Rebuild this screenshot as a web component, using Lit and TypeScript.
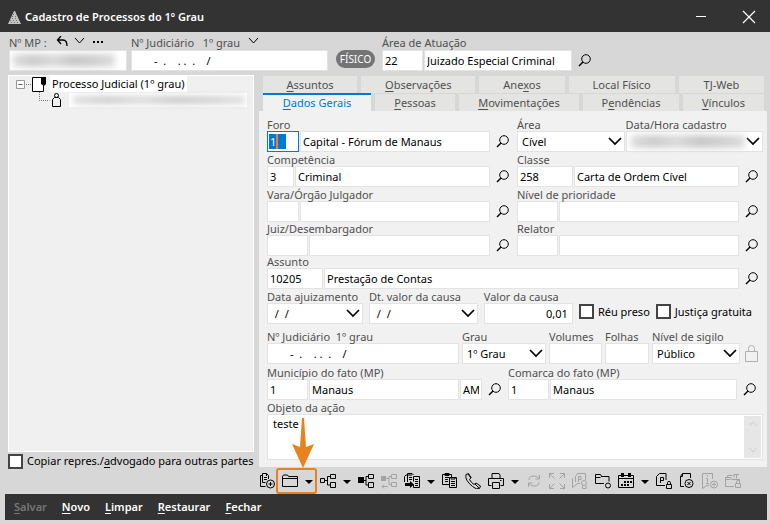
import { LitElement, html, css, svg, nothing, TemplateResult } from "lit";
import { customElement } from "lit/decorators.js";
import { classMap } from "lit/directives/class-map.js";

const lock = (x: number, y: number) =>
  svg`<path d="M${x} ${y + 3}h5v4h-5z M${x + 1} ${y + 3}v-2q0-1 1.5-1t1.5 1v2"/>`;

const icons: Record<string, TemplateResult> = {
  docsPlus: svg`<path d="M3.500 9.500V.5h4l2 2V6M7.500.5v2.500M3.500 2.500h-2V13.500h5M3.500 9.500h3M5 4.500h3M5 6.500h3"/><circle cx="11.500" cy="11" r="4"/><path d="M11.500 9v4M9.500 11h4"/>`,
  folder: svg`<path d="M.5 3.500v10h15v-10h-9l-1-1.500H1.500zM.5 5.500h15"/>`,
  tree: svg`<path d="M.5 5.500h4v4h-4zM10.500 1.500h5v4h-5zM10.500 9.500h5v5h-5zM4.500 7.500h3M10.500 3.500h-3v8.500h3"/>`,
  treeFull: svg`<path class="solid" d="M0 4h6v6H0z"/><path d="M6 7.500h2M10.500 1.500h5v4h-5zM10.500 9.500h5v5h-5zM10.500 3.500h-2.500v8.500h2.500"/>`,
  treeBack: svg`<path class="solid" d="M0 3h5v5H0z"/><path d="M5 5.500h3M10.500 1.500h5v4h-5zM10.500 9.500h5v4h-5zM10.500 3.500h-2.500v8h2.500M1 13.500h6M3 11.500l-2 2 2 2"/>`,
  docsArrow: svg`<path d="M3.500 2V.5H8L9.500 2M.5 9V3.500l1.500-1.500h6M3.500 2v7M5 4.500h3M5 6.500h3M9.500 3.500h6v11h-6v-3M9.500 3.500v5M11 6.500h3M11 8.500h3M11 10.500h3M11 12.500h3"/><path class="solid" d="M1 10h5V8l4 3.500L6 15v-2H1z"/>`,
  docs: svg`<path d="M7 11.500H.5v-10h9V4M3 4.500h4M3 6.500h3M3 8.500h3M3 .5h4v2H3zM7.500 4.500h7v10h-7zM9 4v2h4V4M9 8.500h4M9 10.500h4M9 12.500h4"/>`,
  phone: svg`<path d="M1 1.500 3.500.5l2.500 4-1.500 2q1.500 3 4.500 5l2-1.500 4.500 3-1 2.500q-3 1.500-7-2-8-6.500-6.500-12zM3 1l3 4M10 11l4 4"/>`,
  print: svg`<path d="M4 5.500v-5h7l1 1.500v3.500M3.500 12.500h-3v-7h15v7h-3M4.500 9.500h7v6h-7zM12 7.500h1.500"/>`,
  refresh: svg`<path d="M3 7q0-4 5-4 3 0 5 2.500M13.500 2v4h-4M13 9q0 4-5 4-3 0-5-2.500M2.500 14v-4h4"/>`,
  expand: svg`<path d="M.5 5V.5H5M.5.5l5 5M11 .5h4.500V5M15.500.5l-5 5M.5 11v4.500H5M.5 15.500l5-5M11 15.500h4.500V11M15.500 15.500l-5-5"/>`,
  stampP: svg`<path d="M3.500 9V3.500l2-3h8V7M6.500 9V3.500H9v3H6.500M.5 5.500v9l5-4H8"/><circle cx="12" cy="10" r="2.500"/><path d="M10.500 12.500v3h3.500v-3"/>`,
  folderDot: svg`<path d="M9 10.500H.5v-9h5l1 2h7.500v5M.5 4.500h5M6.500 3.500h7"/><circle cx="13" cy="12.500" r="2.500"/>`,
  calendar: svg`<path d="M.5 2.500h15v12H.5zM.5 5.500h15"/><path class="solid" d="M3 0h3v4H3zM10 0h3v4h-3zM6 8h2v2H6zM9 8h2v2H9zM12 8h2v2h-2zM3 11h2v2H3zM6 11h2v2H6zM9 11h2v2H9z"/>`,
  docPLock: svg`<path d="M9 12.500H.5V3.500l3-3h6.500V7M4.500 10V4.500h3v3h-3"/>${lock(10.5, 8.5)}`,
  docX: svg`<path d="M5 13.500H1.500V3.500l2-3h8V5M3.500.5v3h-2"/><circle cx="10" cy="10.500" r="4"/><path d="m8.500 9 3 3m0-3-3 3"/>`,
  bookPlus: svg`<path d="M7 12.500H5l-4.500 3V.5h10V6M5.500 2v1.500M4 5.500h1.500v4M4 10.500h3"/><circle cx="12" cy="11.500" r="3.500"/><path d="M12 9.500v4M10 11.500h4"/>`,
  folderLock: svg`<path d="M9 13.500H.5v-9h5l1.500 2h7M.5 6.500h5M2.500 4V2.500h5M9 4.500V1.500h5M11.500 1.500v4M14.500 6v2"/>${lock(10.5, 7.5)}`,
};

const draw = (name: string) =>
  html`<svg class="glyph" viewBox="0 0 16 16" width="16" height="16" aria-hidden="true">${icons[name]}</svg>`;

/* The letter after "&" is the access key and is underlined. */
const keyed = (text: string) => {
  const at = text.indexOf("&");
  return at < 0
    ? html`${text}`
    : html`${text.slice(0, at)}<u>${text[at + 1]}</u>${text.slice(at + 2)}`;
};

const CASE_MASK = "       -  .    . .  .    /";

interface Tool { icon: string; label: string; menu?: boolean; off?: boolean; marked?: boolean; }

const tools: Tool[] = [
  { icon: "docsPlus", label: "Adicionar documentos" },
  { icon: "folder", label: "Pasta digital", menu: true, marked: true },
  { icon: "tree", label: "Partes", menu: true },
  { icon: "treeFull", label: "Dependentes" },
  { icon: "treeBack", label: "Desvincular", off: true },
  { icon: "docsArrow", label: "Encaminhar", menu: true },
  { icon: "docs", label: "Copiar" },
  { icon: "phone", label: "Telefones" },
  { icon: "print", label: "Imprimir", menu: true },
  { icon: "refresh", label: "Atualizar", off: true },
  { icon: "expand", label: "Expandir", off: true },
  { icon: "stampP", label: "Certificar", off: true },
  { icon: "folderDot", label: "Situação da pasta" },
  { icon: "calendar", label: "Agenda", menu: true },
  { icon: "docPLock", label: "Sigilo" },
  { icon: "docX", label: "Cancelar documento" },
  { icon: "bookPlus", label: "Informações", off: true },
  { icon: "folderLock", label: "Bloquear pasta", off: true },
];

@customElement("app-root")
export class AppRoot extends LitElement {
  static styles = css`
    :host {
      display: flex; flex-direction: column; min-height: 100vh; box-sizing: border-box;
      background: #d7d7d7; color: #000;
      font: 11px/16px "Noto Sans", "Open Sans", sans-serif;
      --line: #e3e3e3; --dark: #333; --blue: #0078d7; --orange: #e8821e;
    }
    * { box-sizing: border-box; }
    button, input, select, textarea { font: inherit; color: inherit; margin: 0; border-radius: 0; }
    button { border: 0; padding: 0; background: none; }
    svg { display: block; fill: none; stroke: currentColor; }
    u { text-underline-offset: 2px; }

    .title { display: flex; align-items: center; height: 32px; padding: 2px 14px 0 8px; background: var(--dark); color: #fff; }
    .title h1 { flex: 1; margin: 0 0 0 4px; font-size: 11px; font-weight: 600; line-height: 16px; }
    .window { display: flex; gap: 34px; }
    .window button { width: 14px; height: 14px; }

    .head { display: grid; grid-template-columns: 118px 197fr 46px 209fr 175fr; align-items: end; column-gap: 4px; height: 39px; padding: 0 0 0 9px; }
    .cap { display: flex; align-items: center; height: 15px; color: #505050; }
    .cap svg { color: #000; }
    .pill { margin: 0 3px 3px 4px; height: 18px; border-radius: 9px; background: #747474; color: #fff; text-align: center; font-size: 10px; line-height: 18px; }

    input, select, textarea { min-width: 0; width: 100%; height: 21px; padding: 0 2px; border: 1px solid var(--line); background: #fff; outline: 0; }
    select { appearance: none; padding: 0 4px; }
    .money { text-align: right; padding-right: 4px; }
    .mask { white-space: pre; }
    .focus { border-color: var(--blue); color: #fff; padding: 0 2px;
      background: linear-gradient(#f08030, #f08030) 8px 2px / 2px 15px no-repeat, linear-gradient(var(--blue), var(--blue)) 1px 2px / 17px 15px no-repeat, #fff; }

    .field { display: block; min-width: 0; }
    .field > .name { position: relative; z-index: 1; display: block; height: 12px; line-height: 12px; color: #505050; white-space: pre; }
    .pair { display: grid; grid-template-columns: var(--code, 32px) 1fr 18px; column-gap: 1px; align-items: center; }
    .w26 { --code: 27px; } .w32 { --code: 32px; } .w40 { --code: 41px; } .w56 { --code: 56px; }
    .find { display: grid; place-items: center end; height: 21px; }
    .drop, .hidden { position: relative; display: block; }
    .drop svg { position: absolute; right: 3px; top: 6px; pointer-events: none; }
    .hidden::after { content: ""; position: absolute; inset: 4px 18px 4px 5px; filter: blur(3px); pointer-events: none;
      background: linear-gradient(90deg, #ddd, #ccc 20%, #dadada 40%, #c8c8c8 60%, #d0d0d0 80%, #ddd); }
    .hidden.plain::after { inset: 4px 12px 4px 4px; }
    .secret.plain::after { inset: 3px 2px 3px 4px; }

    .main { flex: 1; display: grid; grid-template-columns: minmax(0, 246px) minmax(0, 1fr); column-gap: 5px; padding: 4px 3px 0 8px; }
    .left { display: flex; flex-direction: column; }
    .tree { flex: 1; margin: 0; padding: 0 6px; list-style: none; border: 1px solid #fff; background: #f0f0f0; }
    .tree li { display: flex; align-items: center; height: 16px; }
    .tree .leaf { padding-left: 22px; }
    .tree .text { padding: 0 2px; background: #fff; line-height: 16px; }
    .tree .secret { width: 178px; height: 14px; background: #fff; }
    .check { display: flex; align-items: center; gap: 4px; white-space: nowrap; }
    .check input { appearance: none; flex: none; width: 15px; height: 15px; border: 2px solid #444; background: #fff; }
    .left .check { height: 42px; padding-bottom: 24px; }

    .tabs { display: flex; gap: 4px; padding: 0 3px 0 4px; }
    .tabs.top { margin: 1px 0; }
    .tab { flex: var(--grow) 1 0; height: 17px; background: #e4e4e2; color: #505050; line-height: 17px; white-space: nowrap; }
    .tab.on { height: 18px; margin-top: -1px; border-top: 2px solid var(--blue); background: #f1f1f1; color: var(--blue); line-height: 16px; }
    .g108 { --grow: 108; } .g94 { --grow: 94; } .g114 { --grow: 114; } .g85 { --grow: 85; } .g106 { --grow: 106; }
    .g80 { --grow: 80; } .g120 { --grow: 120; } .g96 { --grow: 96; } .g81 { --grow: 81; }

    .panel { display: grid; grid-template-rows: 35px 35px 35px 34px 33px 35px 40px 36px 60px; align-items: end; padding: 6px 4px 7px 8px; background: #f1f1f1; }
    .row { display: grid; align-items: end; }
    .row.two { grid-template-columns: 242fr 246fr; column-gap: 8px; }
    .inset { padding-right: 5px; }
    .r-area { display: grid; grid-template-columns: 108fr 138fr; column-gap: 1px; }
    .r-date { grid-template-columns: 97fr 110fr 90fr auto auto; column-gap: 6px; padding-right: 11px; }
    .r-date .check { height: 17px; margin-bottom: 4px; }
    .r-num { grid-template-columns: 192fr 84fr 53fr 44fr 88fr 15px; column-gap: 3px; padding-right: 5px; }
    .r-city { grid-template-columns: 235fr 249fr; column-gap: 7px; padding-right: 7px; }
    .r-city .uf { grid-template-columns: 41px 1fr 22px 18px; }
    .lock { display: grid; place-items: center end; height: 21px; color: #b0b0b0; }
    .memo { display: flex; height: 46px; padding: 1px; border: 1px solid var(--line); background: #fff; }
    .memo textarea { flex: 1; height: 100%; padding: 0 4px; border: 0; resize: none; }
    .memo .bar { display: flex; flex-direction: column; justify-content: space-between; align-items: center; width: 17px; padding: 5px 0; background: #e6e6e6; color: #cdcdcd; }

    .tools { display: flex; align-items: center; gap: 7px; height: 26px; margin-top: 1px; }
    .tool { position: relative; display: flex; align-items: center; gap: 7px; }
    .tool.off { color: #a3a3a3; }
    .off button { color: inherit; }
    .tool .caret { width: 8px; height: 16px; }
    .solid, .caret svg { fill: currentColor; stroke: none; }
    .ring { position: absolute; inset: -5px -4px -5px -6px; border: 2px solid var(--orange); border-radius: 3px; pointer-events: none; }
    .pointer { position: absolute; left: 9px; bottom: 21px; color: var(--orange); pointer-events: none; }
    .pointer path { fill: currentColor; stroke: none; }

    .actions { display: flex; gap: 15px; height: 26px; margin: 0 3px 4px 5px; padding: 0 9px; background: var(--dark); color: #fff; }
    .actions button { font-weight: 600; }
    .actions button:disabled { color: #777; }
  `;

  private find() {
    return html`<button class="find" aria-label="Pesquisar">
      <svg width="13" height="13" viewBox="0 0 13 13"><circle cx="8" cy="5" r="4.300"/><path stroke-width="1.500" d="M5 8 1 12"/></svg></button>`;
  }

  private chevron() {
    return html`<svg width="14" height="9" viewBox="0 0 14 9" stroke-width="1.700"><path d="m1 1 6 6 6-6"/></svg>`;
  }

  private pair(label: string, width: string, code: string, name: string, extra = "", focus = false) {
    return html`<div class="field ${extra}">
      <span class="name">${label}</span>
      <div class="pair ${width}">
        <input class=${classMap({ focus })} aria-label="${label}: código" .value=${code}>
        <input aria-label=${label} .value=${name}>
        ${this.find()}
      </div>
    </div>`;
  }

  private select(label: string, value: string, hidden = false) {
    return html`<label class="field"><span class="name">${label}</span>
      <span class=${classMap({ drop: true, hidden })}>
        <select class="mask"><option>${value}</option></select>${this.chevron()}
      </span></label>`;
  }

  private text(label: string, value = "", kind = "") {
    return html`<label class="field"><span class="name">${label}</span>
      <input class=${kind} .value=${value}></label>`;
  }

  private check(label: string) {
    return html`<label class="check"><input type="checkbox"><span>${keyed(label)}</span></label>`;
  }

  private tab(label: string, grow: number, on = false) {
    return html`<button role="tab" aria-selected=${on} class="tab g${grow} ${on ? "on" : ""}">${keyed(label)}</button>`;
  }

  private tool(t: Tool) {
    return html`<div class=${classMap({ tool: true, off: !!t.off })}>
      <button aria-label=${t.label} ?disabled=${!!t.off}>${draw(t.icon)}</button>
      ${t.menu ? html`<button class="caret" aria-label="${t.label}: opções">
        <svg width="8" height="16" viewBox="0 0 8 16"><path d="M0 7h8l-4 4z"/></svg></button>` : nothing}
      ${t.marked ? html`<span class="ring"></span>
        <svg class="pointer" width="24" height="50" viewBox="0 0 24 50"><path d="M11 0h2l2 29 8-3-11 24L1 26l8 3z"/></svg>` : nothing}
    </div>`;
  }

  render() {
    return html`
      <header class="title">
        <svg width="13" height="13" viewBox="0 0 13 13"><path fill="#c4c4c4" stroke="none" d="M6 0h1l6 13H0z"/><path stroke="#777" stroke-dasharray="1 2" d="M5 3.500h4M4 5.500h6M4 7.500h7M2 9.500h9M3 11.500h9"/></svg>
        <h1>Cadastro de Processos do 1º Grau</h1>
        <div class="window">
          <button aria-label="Minimizar"><svg width="14" height="14" viewBox="0 0 14 14"><path d="M2 6.500h10"/></svg></button>
          <button aria-label="Fechar janela"><svg width="14" height="14" viewBox="0 0 14 14"><path stroke-width="1.200" d="m1 1 12 12M13 1 1 13"/></svg></button>
        </div>
      </header>

      <section class="head">
        <div>
          <div class="cap"><span>Nº MP :</span>
            <svg width="60" height="14" viewBox="0 0 60 14"><path stroke-width="1.300" d="M14 0 10.500 4l3.500 4M10.500 4H16q4 0 4 6"/><path d="m28 2 4.500 5L37 2"/><path class="solid" d="M46 5h2v2h-2zM50 5h2v2h-2zM54 5h2v2h-2z"/></svg>
          </div>
          <span class="hidden plain"><input aria-label="Nº MP"></span>
        </div>
        <div>
          <div class="cap mask">Nº Judiciário   1º grau  <svg width="14" height="14" viewBox="0 0 14 14"><path d="m3 2 4.500 5L12 2"/></svg></div>
          <input class="mask" aria-label="Nº Judiciário 1º grau" .value=${CASE_MASK}>
        </div>
        <span class="pill">FÍSICO</span>
        <div>
          <div class="cap">Área de Atuação</div>
          <div class="pair w40"><input aria-label="Código da área" value="22"><input aria-label="Área de Atuação" value="Juizado Especial Criminal">${this.find()}</div>
        </div>
      </section>

      <main class="main">
        <section class="left">
          <ul class="tree">
            <li><svg width="35" height="16" viewBox="0 0 35 16"><path fill="#fff" stroke="#999" d="M1.500 4.500h8v8h-8z"/><path stroke="#26a" d="M3.500 8.500h4"/><path stroke="#777" stroke-dasharray="1 1" d="M11 8.500h6"/><path fill="#fff" d="M17.500 1.500h11v14h-11z"/><path fill="#000" stroke="none" d="M26 1h5v7l-2 2-3-2z"/></svg>
              <span class="text">Processo Judicial (1º grau)</span></li>
            <li class="leaf"><svg width="32" height="16" viewBox="0 0 32 16"><path stroke="#777" stroke-dasharray="1 1" d="M2.500 0v8.500h10"/><circle cx="19.500" cy="3.500" r="2"/><path d="M15.500 14.500v-7l2-2h4l2 2v7z"/></svg>
              <span class="secret hidden plain"></span></li>
          </ul>
          ${this.check("Copiar repres./&advogado para outras partes")}
        </section>

        <section>
          <div class="tabs top" role="tablist">
            ${this.tab("&Assuntos", 94)}${this.tab("&Observações", 114)}${this.tab("Ane&xos", 85)}${this.tab("Local Físico", 106)}${this.tab("TJ-Web", 85)}
          </div>
          <div class="tabs" role="tablist">
            ${this.tab("&Dados Gerais", 108, true)}${this.tab("&Pessoas", 80)}${this.tab("&Movimentações", 120)}${this.tab("P&endências", 96)}${this.tab("&Vínculos", 81)}
          </div>

          <div class="panel">
            <div class="row two">
              ${this.pair("Foro", "w32", "1", "Capital - Fórum de Manaus", "", true)}
              <div class="r-area">${this.select("Área", "Cível")}${this.select("Data/Hora cadastro", "", true)}</div>
            </div>
            <div class="row two">
              ${this.pair("Competência", "w26", "3", "Criminal")}
              ${this.pair("Classe", "w56", "258", "Carta de Ordem Cível", "inset")}
            </div>
            <div class="row two">
              ${this.pair("Vara/Órgão Julgador", "w32", "", "")}
              ${this.pair("Nível de prioridade", "w40", "", "", "inset")}
            </div>
            <div class="row two">
              ${this.pair("Juiz/Desembargador", "w40", "", "")}
              ${this.pair("Relator", "w40", "", "", "inset")}
            </div>
            ${this.pair("Assunto", "w56", "10205", "Prestação de Contas", "inset")}
            <div class="row r-date">
              ${this.select("Data ajuizamento", "\u00a0/\u00a0\u00a0/")}
              ${this.select("Dt. valor da causa", "\u00a0/\u00a0\u00a0/")}
              ${this.text("Valor da causa", "0,01", "money")}
              ${this.check("Réu preso")}
              ${this.check("Justiça gratuita")}
            </div>
            <div class="row r-num">
              ${this.text("Nº Judiciário  1º grau", CASE_MASK, "mask")}
              ${this.select("Grau", "1º Grau")}
              ${this.text("Volumes")}
              ${this.text("Folhas")}
              ${this.select("Nível de sigilo", "Público")}
              <span class="lock"><svg width="13" height="17" viewBox="0 0 13 17"><path d="M.5 6.500h12v10H.5zM3.500 6V3.500q0-3 3-3t3 3V6"/></svg></span>
            </div>
            <div class="row r-city">
              <div class="field"><span class="name">Município do fato (MP)</span>
                <div class="pair uf"><input aria-label="Código do município" value="1"><input aria-label="Município do fato" value="Manaus"><input aria-label="UF" value="AM">${this.find()}</div>
              </div>
              ${this.pair("Comarca do fato (MP)", "w40", "1", "Manaus")}
            </div>
            <label class="field"><span class="name">Objeto da ação</span>
              <span class="memo"><textarea .value=${"teste"}></textarea>
                <span class="bar"><svg width="8" height="6" viewBox="0 0 8 6"><path d="m.5 5 3.500-4 3.500 4"/></svg><svg width="8" height="6" viewBox="0 0 8 6"><path d="m.5 1 3.500 4 3.500-4"/></svg></span>
              </span></label>
          </div>

          <div class="tools" role="toolbar">${tools.map((t) => this.tool(t))}</div>
        </section>
      </main>

      <footer class="actions">
        <button disabled>${keyed("&Salvar")}</button>
        <button>${keyed("&Novo")}</button>
        <button>${keyed("&Limpar")}</button>
        <button>${keyed("&Restaurar")}</button>
        <button>${keyed("&Fechar")}</button>
      </footer>`;
  }
}
